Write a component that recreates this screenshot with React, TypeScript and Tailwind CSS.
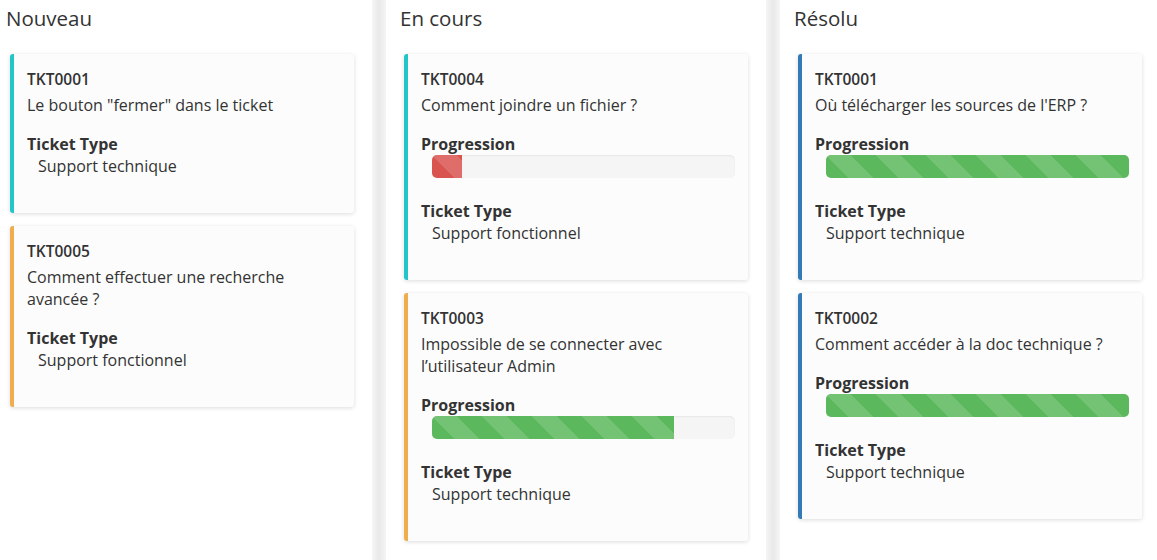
type Ticket = {
  ref: string
  title: string
  type: string
  accent: string
  progress?: { value: number; color: string }
}

const columns: { name: string; tickets: Ticket[] }[] = [
  {
    name: 'Nouveau',
    tickets: [
      { ref: 'TKT0001', title: 'Le bouton "fermer" dans le ticket', type: 'Support technique', accent: 'border-l-[#23c6c8]' },
      { ref: 'TKT0005', title: 'Comment effectuer une recherche avancée ?', type: 'Support fonctionnel', accent: 'border-l-[#f0ad4e]' },
    ],
  },
  {
    name: 'En cours',
    tickets: [
      { ref: 'TKT0004', title: 'Comment joindre un fichier ?', type: 'Support fonctionnel', accent: 'border-l-[#23c6c8]', progress: { value: 10, color: 'bg-[#d9534f]' } },
      { ref: 'TKT0003', title: 'Impossible de se connecter avec l\u2019utilisateur Admin', type: 'Support technique', accent: 'border-l-[#f0ad4e]', progress: { value: 80, color: 'bg-[#5cb85c]' } },
    ],
  },
  {
    name: 'Résolu',
    tickets: [
      { ref: 'TKT0001', title: "Où télécharger les sources de l'ERP ?", type: 'Support technique', accent: 'border-l-[#337ab7]', progress: { value: 100, color: 'bg-[#5cb85c]' } },
      { ref: 'TKT0002', title: 'Comment accéder à la doc technique ?', type: 'Support technique', accent: 'border-l-[#337ab7]', progress: { value: 100, color: 'bg-[#5cb85c]' } },
    ],
  },
]

const stripes =
  'bg-[linear-gradient(45deg,rgba(255,255,255,0.15)_25%,transparent_25%,transparent_50%,rgba(255,255,255,0.15)_50%,rgba(255,255,255,0.15)_75%,transparent_75%,transparent)] bg-[length:50px_50px]'

const TicketCard = ({ ticket }: { ticket: Ticket }) => (
  <div className={`bg-[#fcfcfc] border-l-4 ${ticket.accent} rounded-[3px] shadow-[0_1px_4px_rgba(0,0,0,0.14)] pl-[13px] pr-[13px] pt-[14px] pb-[36px]`}>
    <div className="text-[15.5px] leading-[22px] font-semibold text-[#333]">{ticket.ref}</div>
    <div className="text-[16px] leading-[22px] text-[#333] mt-1">{ticket.title}</div>
    {ticket.progress && (
      <div className="mt-[17px] pb-[5px]">
        <div className="text-[16px] leading-[22px] font-bold text-[#333]">Progression</div>
        <div className="ml-[11px] h-[23px] rounded-[5px] bg-[#f5f5f5] shadow-[inset_0_1px_2px_rgba(0,0,0,0.06)] overflow-hidden">
          <div className={`h-full ${ticket.progress.color} ${stripes}`} style={{ width: `${ticket.progress.value}%` }} />
        </div>
      </div>
    )}
    <div className="mt-[17px] text-[16px] leading-[22px] font-bold text-[#333]">Ticket Type</div>
    <div className="ml-[11px] text-[16px] leading-[22px] text-[#333]">{ticket.type}</div>
  </div>
)

export default function App() {
  return (
    <div className="h-[560px] w-[1157px] overflow-hidden bg-white font-['Open_Sans',sans-serif]">
      <div className="flex h-full -ml-2">
        {columns.map((col, i) => (
          <div key={col.name} className="flex h-full shrink-0">
            {i > 0 && <div className="w-[14px] h-full bg-gradient-to-r from-[#f5f5f5] via-[#e9e9e9] to-[#f5f5f5]" />}
            <section className="w-[380px] h-full bg-white px-[18px]">
              <h2 className="text-[20.5px] leading-[36px] text-[#333] -ml-1 mb-[18px]">{col.name}</h2>
              <div className="flex flex-col gap-[13px]">
                {col.tickets.map((t) => (
                  <TicketCard key={t.ref + t.title} ticket={t} />
                ))}
              </div>
            </section>
          </div>
        ))}
      </div>
    </div>
  )
}
